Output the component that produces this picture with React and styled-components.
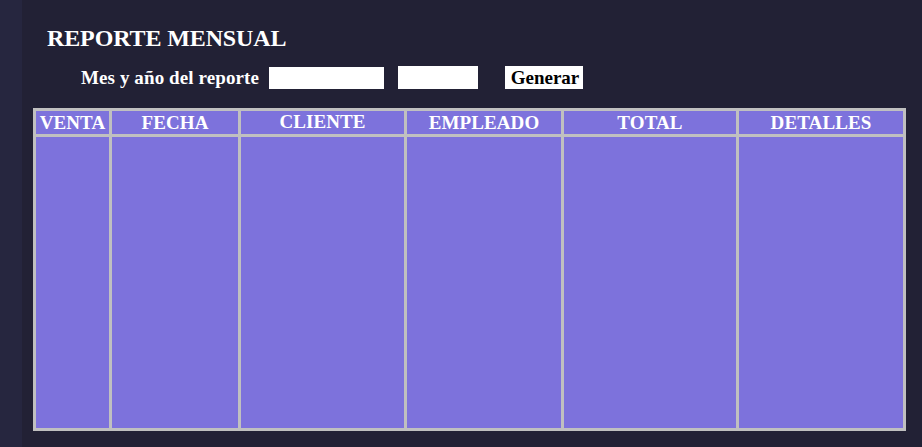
import React from "react";
import styled, { createGlobalStyle } from "styled-components";

const Global = createGlobalStyle`
  html, body { margin: 0; padding: 0; background: #222135; }
  body { font-family: "Liberation Serif", "Times New Roman", serif; }
`;

const Page = styled.div`
  display: flex;
  width: 922px;
  height: 447px;
  background: #222135;
`;

const Sidebar = styled.div`
  width: 22px;
  flex: none;
  background: #26263f;
`;

const Main = styled.main`
  flex: 1;
  padding: 24px 0 0 11px;
  display: flex;
  flex-direction: column;
`;

const Title = styled.h2`
  margin: 0 0 0 14px;
  font-size: 24px;
  line-height: 28px;
  font-weight: bold;
  letter-spacing: -0.12px;
  color: #ffffff;
`;

const FormRow = styled.form`
  display: flex;
  align-items: flex-end;
  margin: 14px 0 0 48px;
  height: 23px;
`;

const Label = styled.label`
  font-size: 19px;
  line-height: 23px;
  font-weight: bold;
  letter-spacing: 0.1px;
  color: #ffffff;
  margin-right: ${(p) => p.$gap}px;
`;

const Field = styled.input`
  width: ${(p) => p.$w}px;
  height: ${(p) => p.$h}px;
  box-sizing: border-box;
  border: none;
  padding: 0;
  background: #ffffff;
  margin-right: ${(p) => p.$gap}px;
  outline: none;
`;

const Button = styled.button`
  height: 23px;
  width: 78px;
  box-sizing: border-box;
  border: none;
  padding: 0 0 0 2px;
  background: #ffffff;
  color: #000000;
  font-family: "Liberation Serif", "Times New Roman", serif;
  font-size: 19px;
  line-height: 23px;
  font-weight: bold;
  cursor: pointer;
`;

const Table = styled.div`
  margin-top: 19px;
  width: 873px;
  box-sizing: border-box;
  display: grid;
  grid-template-columns: 73px 126px 163px 154px 172px 164px;
  grid-template-rows: 23px 291px;
  gap: 3px;
  padding: 3px;
  background: #c0c0c0;
`;

const HeadCell = styled.div`
  background: #7d72dc;
  color: #ffffff;
  font-size: 19px;
  font-weight: bold;
  letter-spacing: 0.1px;
  text-align: center;
  line-height: ${(p) => (p.$raised ? 21 : 23)}px;
  white-space: nowrap;
  overflow: hidden;
`;

const BodyCell = styled.div`
  background: #7d72dc;
`;

const columns = [
  { label: "VENTA" },
  { label: "FECHA" },
  { label: "CLIENTE", raised: true },
  { label: "EMPLEADO" },
  { label: "TOTAL" },
  { label: "DETALLES" },
];

export default function App() {
  return (
    <>
      <Global />
      <Page>
        <Sidebar />
        <Main>
          <Title>REPORTE MENSUAL</Title>
          <FormRow onSubmit={(e) => e.preventDefault()}>
            <Label $gap={10}>Mes y año del reporte</Label>
            <Field $w={115} $h={22} $gap={14} />
            <Field $w={80} $h={23} $gap={27} />
            <Button type="submit">Generar</Button>
          </FormRow>
          <Table>
            {columns.map((c) => (
              <HeadCell key={c.label} $raised={c.raised}>
                {c.label}
              </HeadCell>
            ))}
            {columns.map((c) => (
              <BodyCell key={c.label + "-b"} />
            ))}
          </Table>
        </Main>
      </Page>
    </>
  );
}
